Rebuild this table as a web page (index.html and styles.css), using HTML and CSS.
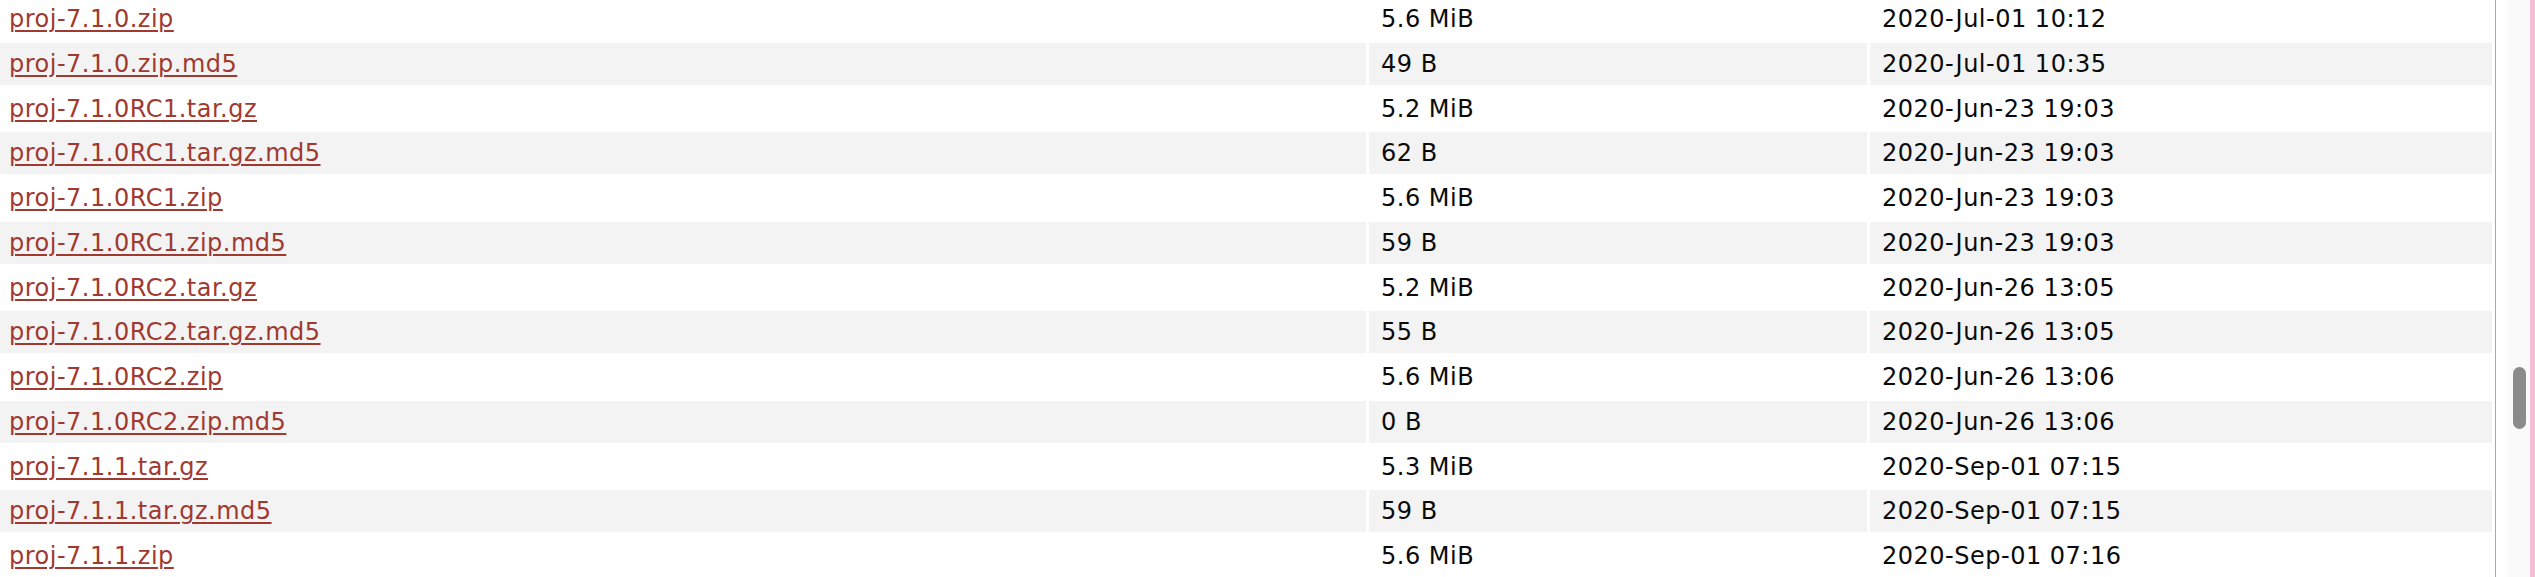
FILE: index.html
```html
<!DOCTYPE html>
<html lang="en">
<head>
<meta charset="utf-8">
<title>Index of /proj</title>
<link rel="stylesheet" href="styles.css">
</head>
<body>
<div class="frame">
  <main class="content">
    <div class="listing">
      <div class="row"><div class="name"><a href="#">proj-7.1.0.zip</a></div><div class="size">5.6 MiB</div><div class="date">2020-Jul-01 10:12</div></div>
      <div class="row alt"><div class="name"><a href="#">proj-7.1.0.zip.md5</a></div><div class="size">49 B</div><div class="date">2020-Jul-01 10:35</div></div>
      <div class="row"><div class="name"><a href="#">proj-7.1.0RC1.tar.gz</a></div><div class="size">5.2 MiB</div><div class="date">2020-Jun-23 19:03</div></div>
      <div class="row alt"><div class="name"><a href="#">proj-7.1.0RC1.tar.gz.md5</a></div><div class="size">62 B</div><div class="date">2020-Jun-23 19:03</div></div>
      <div class="row"><div class="name"><a href="#">proj-7.1.0RC1.zip</a></div><div class="size">5.6 MiB</div><div class="date">2020-Jun-23 19:03</div></div>
      <div class="row alt"><div class="name"><a href="#">proj-7.1.0RC1.zip.md5</a></div><div class="size">59 B</div><div class="date">2020-Jun-23 19:03</div></div>
      <div class="row"><div class="name"><a href="#">proj-7.1.0RC2.tar.gz</a></div><div class="size">5.2 MiB</div><div class="date">2020-Jun-26 13:05</div></div>
      <div class="row alt"><div class="name"><a href="#">proj-7.1.0RC2.tar.gz.md5</a></div><div class="size">55 B</div><div class="date">2020-Jun-26 13:05</div></div>
      <div class="row"><div class="name"><a href="#">proj-7.1.0RC2.zip</a></div><div class="size">5.6 MiB</div><div class="date">2020-Jun-26 13:06</div></div>
      <div class="row alt"><div class="name"><a href="#">proj-7.1.0RC2.zip.md5</a></div><div class="size">0 B</div><div class="date">2020-Jun-26 13:06</div></div>
      <div class="row"><div class="name"><a href="#">proj-7.1.1.tar.gz</a></div><div class="size">5.3 MiB</div><div class="date">2020-Sep-01 07:15</div></div>
      <div class="row alt"><div class="name"><a href="#">proj-7.1.1.tar.gz.md5</a></div><div class="size">59 B</div><div class="date">2020-Sep-01 07:15</div></div>
      <div class="row"><div class="name"><a href="#">proj-7.1.1.zip</a></div><div class="size">5.6 MiB</div><div class="date">2020-Sep-01 07:16</div></div>
    </div>
  </main>
  <div class="divider"></div>
  <div class="gutter"></div>
  <div class="track"><div class="thumb"></div></div>
  <div class="edge"></div>
</div>
</body>
</html>
```

FILE: styles.css
```css
html, body {
  margin: 0;
  padding: 0;
  background: #fff;
  overflow: hidden;
}

body {
  font-family: "DejaVu Sans", "Noto Sans", sans-serif;
  font-size: 24px;
  letter-spacing: 0.5px;
  color: #0a0a0a;
}

.frame {
  display: flex;
  height: 577px;
  width: 2535px;
}

.content {
  width: 2495px;
  flex: none;
  overflow: hidden;
}

.listing {
  display: flex;
  flex-direction: column;
  gap: 2.75px;
  margin: -2px 0 0 -3px;
}

.row {
  display: grid;
  grid-template-columns: 1369px 498px 622px;
  column-gap: 3px;
  height: 42px;
  line-height: 42px;
}

.row > div {
  padding-left: 12px;
  white-space: nowrap;
}

.row.alt > div {
  background: #f3f3f3;
}

.name a {
  color: #a0392f;
  text-decoration: underline;
  text-decoration-thickness: 2px;
  text-underline-offset: 3px;
}

.divider {
  width: 1px;
  flex: none;
  background: #a8a8a8;
}

.gutter {
  width: 12px;
  flex: none;
  background: #fff;
}

.track {
  width: 22px;
  flex: none;
  background: #fafafa;
  padding: 367px 0 0 5px;
  box-sizing: border-box;
}

.thumb {
  width: 13px;
  height: 62px;
  border-radius: 7px;
  background: #8b8b8b;
}

.edge {
  width: 5px;
  flex: none;
  background: #f2bfd3;
}
```
